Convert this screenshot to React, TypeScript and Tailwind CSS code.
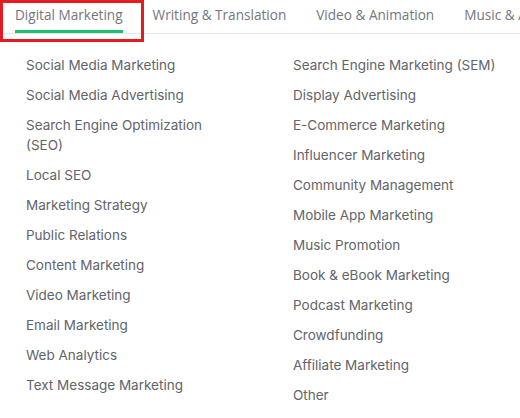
import React from "react";

const col1 = [
  "Social Media Marketing",
  "Social Media Advertising",
  "Search Engine Optimization (SEO)",
  "Local SEO",
  "Marketing Strategy",
  "Public Relations",
  "Content Marketing",
  "Video Marketing",
  "Email Marketing",
  "Web Analytics",
  "Text Message Marketing",
];
const col2 = [
  "Search Engine Marketing (SEM)",
  "Display Advertising",
  "E-Commerce Marketing",
  "Influencer Marketing",
  "Community Management",
  "Mobile App Marketing",
  "Music Promotion",
  "Book & eBook Marketing",
  "Podcast Marketing",
  "Crowdfunding",
  "Affiliate Marketing",
  "Other",
];

export default function App() {
  return (
    <div className="relative w-[520px] h-[418px] overflow-hidden bg-white">
      <div className="flex h-[34px] border-b border-[#e4e5e7] whitespace-nowrap font-['Open_Sans',sans-serif] text-[13.6px] leading-[20px] text-[#74767e]">
        <div className="pl-[15px] pr-[15px]">
          <div className="h-[33px] pt-[5px] border-b-[3px] border-[#1dbf73]">Digital Marketing</div>
        </div>
        <div className="px-[15px] pt-[5px]">Writing &amp; Translation</div>
        <div className="px-[15px] pt-[5px]">Video &amp; Animation</div>
        <div className="px-[15px] pt-[5px]">Music &amp; Audio</div>
      </div>
      <div className="flex pt-[21px] font-['Inter',sans-serif] text-[13.5px] leading-[20px] text-[#62646a]">
        <ul className="w-[293px] shrink-0 pl-[26px] pr-[60px] flex flex-col gap-[10px]">
          {col1.map((t) => (
            <li key={t}>{t}</li>
          ))}
        </ul>
        <ul className="flex-1 flex flex-col gap-[10px]">
          {col2.map((t) => (
            <li key={t}>{t}</li>
          ))}
        </ul>
      </div>
      <div className="absolute left-0 top-0 w-[144px] h-[42px] border-[3px] border-[#e41b23]" />
    </div>
  );
}
